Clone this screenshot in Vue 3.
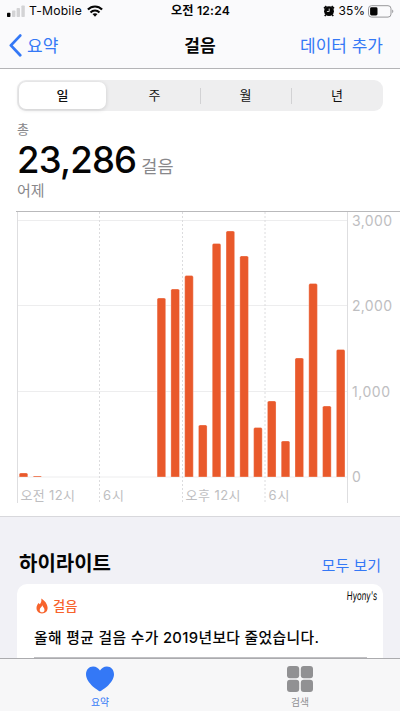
<template>
  <div class="screen">
    <header class="top">
      <div class="status">
        <div class="status-left">
          <svg class="signal" width="19" height="12" viewBox="0 0 19 12">
            <rect x="0" y="7.8" width="3.4" height="4.2" rx="0.8" fill="#050505" />
            <rect x="5" y="5.5" width="3.4" height="6.5" rx="0.8" fill="#d3d3d5" />
            <rect x="9.6" y="3" width="3.4" height="9" rx="0.8" fill="#d3d3d5" />
            <rect x="14.4" y="0.5" width="3.4" height="11.5" rx="0.8" fill="#d3d3d5" />
          </svg>
          <span class="carrier">T-Mobile</span>
          <svg class="wifi" width="16" height="12" viewBox="0 0 16 12">
            <g fill="none" stroke="#050505" stroke-width="2.1">
              <path d="M0.9 4.6C4.9 0.5 11.1 0.5 15.1 4.6" />
              <path d="M3.5 7.4C6 4.9 10 4.9 12.5 7.4" />
            </g>
            <path d="M5.5 9.1C6.9 7.8 9.1 7.8 10.5 9.1L8 11.7Z" fill="#050505" />
          </svg>
        </div>
        <span class="clock">오전 12:24</span>
        <div class="status-right">
          <svg width="12" height="12" viewBox="0 0 12 12">
            <circle cx="6" cy="6.2" r="4.9" fill="#050505" />
            <path d="M1 3.3L3.4 1.1M11 3.3L8.6 1.1" stroke="#050505" stroke-width="1.6" />
            <path d="M2.8 9.6L1.8 11.2M9.2 9.6L10.2 11.2" stroke="#050505" stroke-width="1.5" />
            <path d="M6.2 3.6V6.5H3.9" fill="none" stroke="#fff" stroke-width="0.8" />
          </svg>
          <span class="percent">35%</span>
          <svg width="26" height="13" viewBox="0 0 26 13">
            <rect x="0.5" y="0.7" width="22.5" height="11.4" rx="3" fill="none" stroke="#98989b" />
            <rect x="2.1" y="2.3" width="7.4" height="8.2" rx="1.4" fill="#050505" />
            <path d="M24.2 4.6C25.7 5.2 25.7 7.6 24.2 8.2Z" fill="#98989b" />
          </svg>
        </div>
      </div>
      <nav class="nav">
        <a class="back">
          <svg width="13" height="23" viewBox="0 0 13 23">
            <path d="M11.2 1.6L1.9 11.4L11.2 21.2" fill="none" stroke="#3478f6" stroke-width="2.8" stroke-linecap="round" stroke-linejoin="round" />
          </svg>
          <span>요약</span>
        </a>
        <h1>걸음</h1>
        <a class="add">데이터 추가</a>
      </nav>
    </header>

    <main>
      <div class="segments">
        <button
          v-for="(range, i) in ranges"
          :key="range"
          :class="{ active: selected === i, divided: i > 1 }"
          @click="selected = i"
        >
          {{ range }}
        </button>
      </div>

      <section class="summary">
        <p class="label">총</p>
        <p class="total"><strong>23,286</strong><span>걸음</span></p>
        <p class="day">어제</p>
      </section>

      <svg class="chart" width="384" height="293" viewBox="16 211 384 293">
        <path d="M16 211.5H400" stroke="#b9b9bb" />
        <g stroke="#ededee">
          <path v-for="tick in ticks" :key="tick.label" :d="`M17 ${tick.y}H347`" />
        </g>
        <path d="M17.5 212V503M347.5 212V503" stroke="#dedee0" />
        <path d="M99.5 212V503M182.5 212V503M265 212V503" stroke="#dcdcde" stroke-dasharray="2 2" />
        <path v-for="bar in bars" :key="bar.x" :d="bar.path" fill="#e9592b" stroke="#fff" stroke-width="0.3" />
        <g class="axis y-axis">
          <text v-for="tick in ticks" :key="tick.label" x="352" :y="tick.y + 5" :textLength="tick.width">{{ tick.label }}</text>
        </g>
        <g class="axis x-axis">
          <text v-for="hour in hours" :key="hour.x" :x="hour.x" y="499.5" :textLength="hour.width">{{ hour.label }}</text>
        </g>
      </svg>
    </main>

    <section class="highlights">
      <div class="heading">
        <h2>하이라이트</h2>
        <a>모두 보기</a>
      </div>
      <article class="card">
        <span class="signature">Hyony's</span>
        <div class="category">
          <svg width="12" height="16" viewBox="0 0 12 16">
            <path
              fill="#f7632c"
              fill-rule="evenodd"
              d="M5.2 0.4C8.4 2.1 11.6 5.9 11.6 9.8C11.6 13.4 9.2 15.5 6 15.5C2.8 15.5 0.5 13.3 0.5 10.1C0.5 7.8 1.5 6.2 2.6 4.9L3.8 6.2C5.2 4.6 5.8 2.5 5.2 0.4ZM6.3 7.3C5.9 9.2 3.7 9.9 3.7 12C3.7 13.5 4.7 14.3 6 14.3C7.5 14.3 8.5 13.3 8.5 11.9C8.5 10 6.9 9.1 6.3 7.3Z"
            />
          </svg>
          <span>걸음</span>
        </div>
        <p class="message">올해 평균 걸음 수가 2019년보다 줄었습니다.</p>
        <hr />
      </article>
    </section>

    <footer class="tabs">
      <a class="tab current">
        <svg width="28" height="26" viewBox="0 0 28 26">
          <path fill="#3478f6" d="M14 25.3C12.9 25.3 0 17.3 0 8.3C0 3.8 3 0.5 7.1 0.5C10.2 0.5 12.6 2.2 14 4.6C15.4 2.2 17.8 0.5 20.9 0.5C25 0.5 28 3.8 28 8.3C28 17.3 15.1 25.3 14 25.3Z" />
        </svg>
        <span>요약</span>
      </a>
      <a class="tab">
        <svg width="26" height="26" viewBox="0 0 26 26" fill="#919193">
          <rect width="12.2" height="12.2" rx="3" />
          <rect x="13.8" width="12.2" height="12.2" rx="3" />
          <rect y="13.8" width="12.2" height="12.2" rx="3" />
          <rect x="13.8" y="13.8" width="12.2" height="12.2" rx="3" />
        </svg>
        <span>검색</span>
      </a>
    </footer>
  </div>
</template>

<script setup>
import { ref } from 'vue';

const ranges = ['일', '주', '월', '년'];
const selected = ref(0);

// 시간별 걸음 수 (0시 ~ 23시)
const steps = [
  47, 12, 0, 0, 0, 0, 0, 0, 0, 0, 2093, 2198,
  2356, 608, 2731, 2877, 2585, 579, 889, 421, 1392, 2263, 830, 1491,
];

const BASELINE = 477;
const SLOT = 13.79;
const BAR_WIDTH = 8.6;

/**
 * 윗모서리만 둥근 막대 경로를 만든다.
 * @param {number} x - 막대 왼쪽 좌표.
 * @param {number} height - 막대 높이.
 * @returns {string} SVG 경로.
 */
const barPath = (x, height) => {
  const r = Math.min(1.5, height);
  return `M${x} ${BASELINE}v${r - height}q0 ${-r} ${r} ${-r}h${BAR_WIDTH - 2 * r}q${r} 0 ${r} ${r}v${height - r}z`;
};

const bars = steps
  .map((count, hour) => {
    const x = 19.2 + hour * SLOT;
    return { x, count, path: barPath(x, count * 0.0855) };
  })
  .filter((bar) => bar.count > 0);

const ticks = [
  { label: '3,000', y: 220.5, width: 40 },
  { label: '2,000', y: 305.5, width: 40 },
  { label: '1,000', y: 391.5, width: 38 },
  { label: '0', y: 477, width: 9 },
];

const hours = [
  { label: '오전 12시', x: 20.5, width: 54.5 },
  { label: '6시', x: 103, width: 21 },
  { label: '오후 12시', x: 185.5, width: 55 },
  { label: '6시', x: 268.5, width: 21 },
];
</script>

<style>
body {
  margin: 0;
}
</style>

<style scoped>
.screen {
  display: flex;
  flex-direction: column;
  width: 400px;
  height: 711px;
  overflow: hidden;
  background: #fff;
  color: #050505;
  font-family: Inter, 'Noto Sans CJK KR', sans-serif;
}

h1,
h2,
p {
  margin: 0;
}

svg {
  display: block;
  flex: none;
}

span,
a,
p {
  white-space: nowrap;
}

.top {
  flex: none;
  box-sizing: border-box;
  height: 69px;
  background: #fafafc;
  border-bottom: 1px solid #b4b4b7;
}

.status {
  display: grid;
  grid-template-columns: 1fr auto 1fr;
  align-items: center;
  height: 22px;
  padding: 0 6px 0 7px;
  font-size: 12px;
  line-height: 22px;
}

.status-left,
.status-right {
  display: flex;
  align-items: center;
}

.signal {
  margin-right: 3px;
}

.carrier {
  font-size: 12.2px;
  letter-spacing: 0.2px;
}

.wifi {
  margin-left: 5px;
}

.clock {
  font-size: 12.2px;
  font-weight: 600;
  letter-spacing: 0.2px;
}

.status-right {
  justify-content: flex-end;
}

.percent {
  margin: 0 3px 0 4px;
}

.nav {
  display: grid;
  grid-template-columns: 1fr auto 1fr;
  align-items: center;
  height: 46px;
  padding: 0 17px 0 9px;
  color: #3478f6;
  font-size: 17px;
}

.nav span,
.nav h1,
.nav .add {
  margin-top: -2px;
}

.back {
  display: flex;
  align-items: center;
  gap: 5px;
}

.nav h1 {
  margin-left: 8px;
  color: #050505;
  font-size: 17px;
  font-weight: 600;
}

.add {
  justify-self: end;
}

main {
  flex: none;
  box-sizing: border-box;
  height: 448px;
  padding: 11px 0 0 16px;
  border-bottom: 1px solid #d8d8dc;
}

.segments {
  display: grid;
  grid-template-columns: 90px 91px 91px 92px;
  box-sizing: border-box;
  width: 366px;
  height: 31px;
  margin-left: 1px;
  padding: 2px 0 2px 2px;
  border-radius: 9px;
  background: #eeeeef;
}

.segments button {
  display: flex;
  align-items: center;
  justify-content: center;
  margin: 0;
  padding: 0 0 2px;
  border: 0;
  background: none;
  color: #111;
  font: inherit;
  font-size: 13px;
}

.segments .active {
  margin-right: 3px;
  border-radius: 7px;
  background: #fff;
  box-shadow: 0 1px 4px rgba(0, 0, 0, 0.14);
  font-weight: 500;
}

.segments .divided {
  background: linear-gradient(#d2d2d4, #d2d2d4) left center / 1px 16px no-repeat;
}

.summary {
  height: 100px;
  padding-left: 1px;
  color: #88888b;
}

.label {
  padding-top: 10px;
  font-size: 13px;
  line-height: 17px;
}

.total {
  display: flex;
  align-items: baseline;
  height: 44px;
  line-height: 45px;
}

.total strong {
  color: #050505;
  font-size: 36.5px;
  font-weight: 500;
  letter-spacing: -0.8px;
}

.total span {
  margin-left: 5px;
  font-size: 17.5px;
}

.day {
  font-size: 15px;
  line-height: 18px;
}

.axis {
  fill: #bebec1;
}

.y-axis {
  font-size: 14px;
}

.x-axis {
  font-size: 13px;
}

.highlights {
  flex: 1;
  min-height: 0;
  padding: 0 17px;
  overflow: hidden;
  background: #f1f1f6;
}

.heading {
  display: flex;
  align-items: center;
  justify-content: space-between;
  height: 35px;
  padding: 28px 2px 4px;
}

.heading h2 {
  font-size: 20px;
  font-weight: 600;
}

.heading a {
  margin-top: 3px;
  color: #3478f6;
  font-size: 15px;
}

.card {
  position: relative;
  height: 120px;
  padding: 14px 16px 0 17px;
  border-radius: 10px;
  background: #fff;
}

.signature {
  position: absolute;
  top: 5px;
  right: 6px;
  font-size: 12px;
  font-weight: 400;
  font-family: Inter, sans-serif;
  line-height: 14px;
  transform: scaleX(0.66) skewX(-5deg);
  transform-origin: right;
}

.category {
  display: flex;
  align-items: center;
  gap: 5px;
  height: 16px;
  padding-left: 2px;
  color: #f7632c;
  font-size: 13.3px;
  font-weight: 500;
}

.category span {
  margin-top: -2px;
}

.message {
  margin-top: 14px;
  font-size: 14.8px;
  font-weight: 500;
  letter-spacing: 0.35px;
  line-height: 20px;
}

.card hr {
  height: 1px;
  margin: 9px 0 0;
  border: 0;
  background: #c0c0c3;
}

.tabs {
  display: grid;
  flex: none;
  grid-template-columns: 1fr 1fr;
  box-sizing: border-box;
  height: 53px;
  border-top: 1px solid #ababae;
  background: #f7f7f8;
}

.tab {
  display: flex;
  flex-direction: column;
  align-items: center;
  padding-top: 7px;
  color: #919193;
  font-size: 9.8px;
  line-height: 13px;
}

.tab span {
  margin-top: 4px;
}

.current {
  color: #3478f6;
}
</style>
